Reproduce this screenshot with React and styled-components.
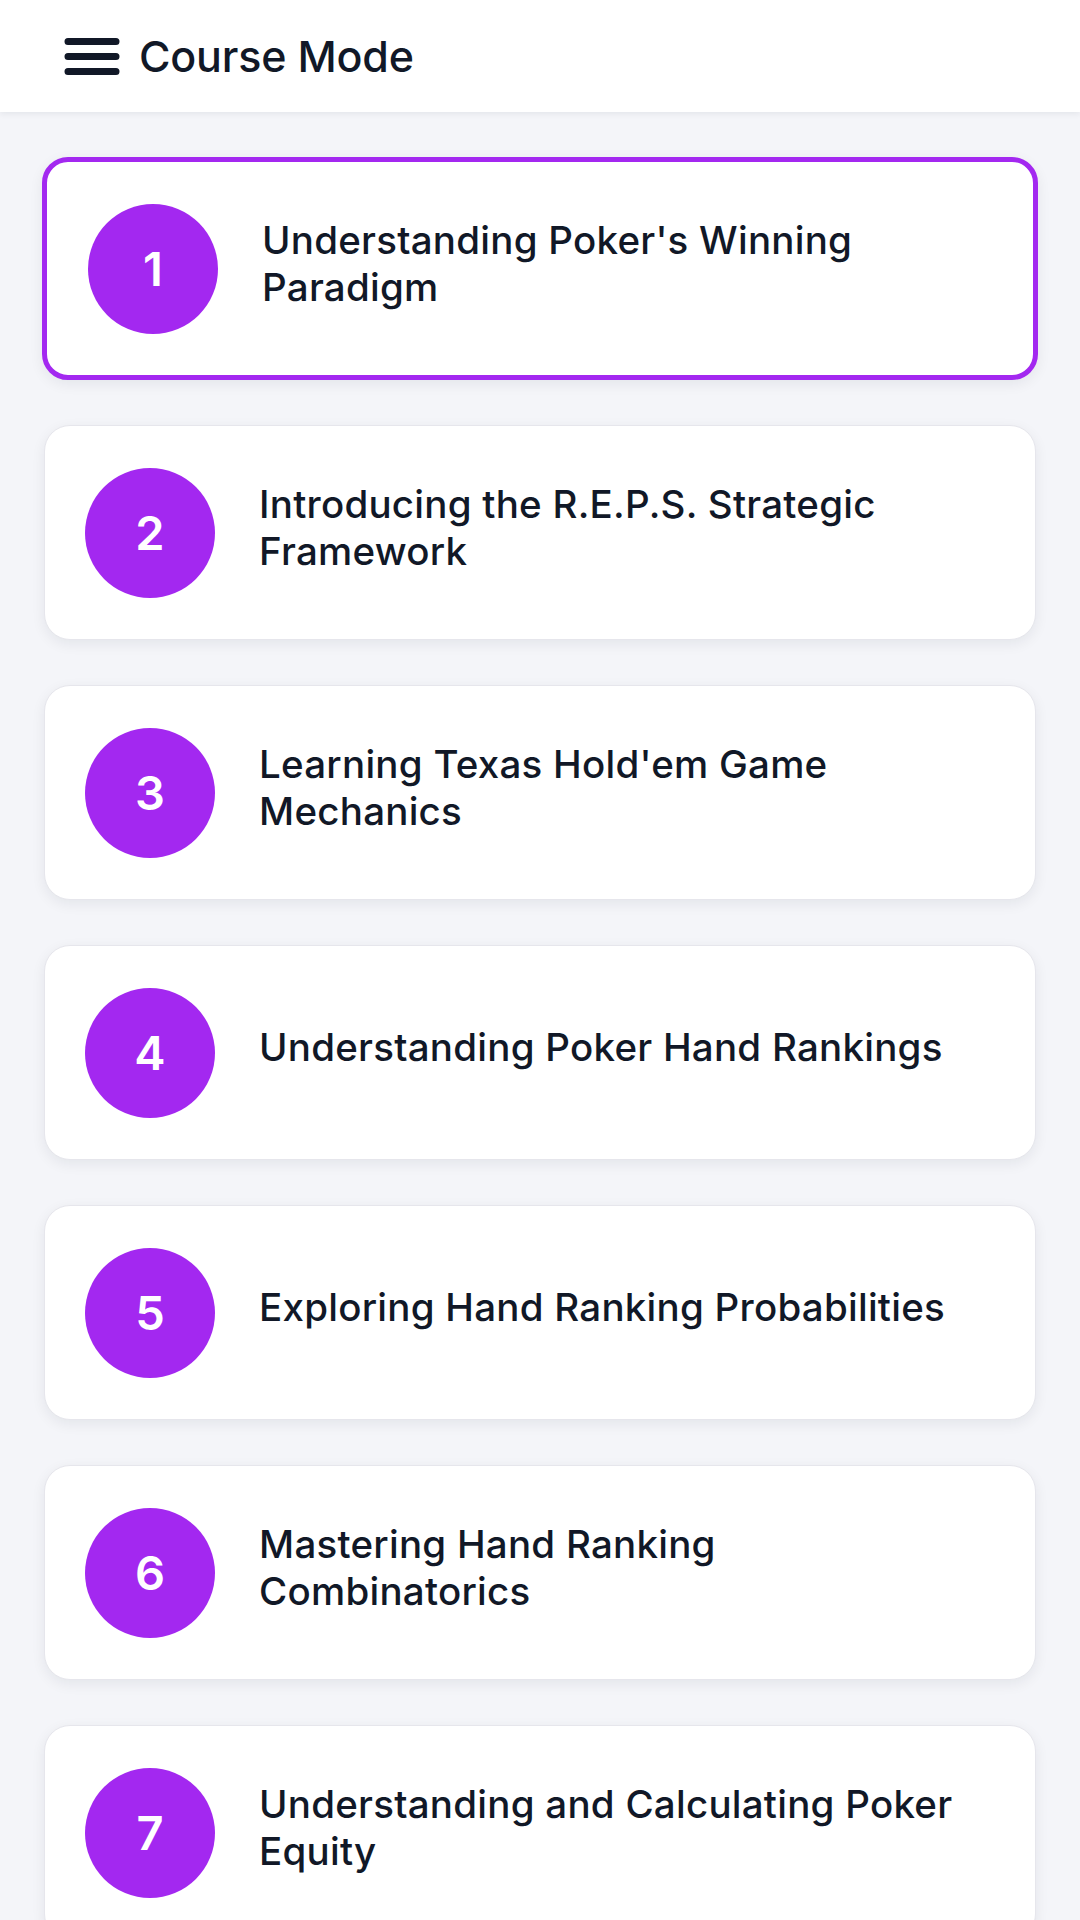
import React from 'react'
import styled, { createGlobalStyle } from 'styled-components'

const GlobalStyle = createGlobalStyle`
  body {
    margin: 0;
    background: #f4f5f9;
    font-family: Inter, "Noto Sans", "Liberation Sans", sans-serif;
    color: #111827;
  }
`

const Header = styled.header`
  height: 112px;
  background: #ffffff;
  display: flex;
  align-items: center;
  gap: 19px;
  padding-left: 64px;
  box-shadow: 0 2px 6px rgba(17, 24, 39, 0.07);
  position: relative;
`

const MenuButton = styled.button`
  border: none;
  background: none;
  padding: 0;
  display: flex;
  cursor: pointer;
`

const Title = styled.h1`
  margin: 0;
  font-size: 43px;
  font-weight: 500;
  letter-spacing: -0.2px;
  color: #111827;
`

const List = styled.main`
  display: flex;
  flex-direction: column;
  gap: 45px;
  padding: 45px 44px;
`

const Card = styled.div`
  box-sizing: border-box;
  height: ${p => (p.$active ? '223px' : '215px')};
  margin: ${p => (p.$active ? '0 -2px' : '0')};
  background: #ffffff;
  border-radius: 26px;
  border: ${p => (p.$active ? '5px solid #a328f0' : '1.5px solid #e6e6ec')};
  box-shadow: 0 4px 14px rgba(17, 24, 39, 0.07);
  display: flex;
  align-items: center;
  gap: 44px;
  padding: 0 50px 0 ${p => (p.$active ? '41px' : '40px')};
  cursor: pointer;
`

const Badge = styled.div`
  flex-shrink: 0;
  width: 130px;
  height: 130px;
  border-radius: 50%;
  background: #a328f0;
  color: #ffffff;
  display: flex;
  align-items: center;
  justify-content: center;
  font-size: 47px;
  font-weight: 600;
`

const LessonTitle = styled.div`
  font-size: 38.5px;
  font-weight: 500;
  line-height: 47px;
  letter-spacing: 0.25px;
  margin-bottom: 10px;
  color: #111827;
`

const lessons = [
  "Understanding Poker's Winning Paradigm",
  'Introducing the R.E.P.S. Strategic Framework',
  "Learning Texas Hold'em Game Mechanics",
  'Understanding Poker Hand Rankings',
  'Exploring Hand Ranking Probabilities',
  'Mastering Hand Ranking Combinatorics',
  'Understanding and Calculating Poker Equity',
]

function MenuIcon() {
  return (
    <svg width="56" height="37" viewBox="0 0 56 37" fill="none">
      <path d="M4 3.5h48M4 18.5h48M4 33.5h48" stroke="#111827" strokeWidth="7" strokeLinecap="round" />
    </svg>
  )
}

function App() {
  const [current, setCurrent] = React.useState(0)

  return (
    <>
      <GlobalStyle />
      <Header>
        <MenuButton aria-label="Menu">
          <MenuIcon />
        </MenuButton>
        <Title>Course Mode</Title>
      </Header>
      <List>
        {lessons.map((lesson, i) => (
          <Card key={i} $active={i === current} onClick={() => setCurrent(i)}>
            <Badge>{i + 1}</Badge>
            <LessonTitle>{lesson}</LessonTitle>
          </Card>
        ))}
      </List>
    </>
  )
}

export default App
